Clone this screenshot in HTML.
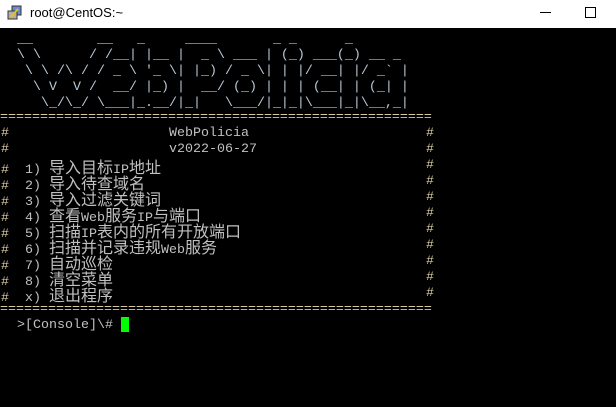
<!DOCTYPE html>
<html><head><meta charset="utf-8"><style>
*{margin:0;padding:0}
body{width:616px;height:407px;background:#000;overflow:hidden;position:relative;font-family:"Liberation Mono",monospace}
#tb{position:absolute;left:0;top:0;width:616px;height:28px;background:#fff}
#tt{position:absolute;left:30px;top:5px;font:13px "Liberation Sans",sans-serif;color:#000}
.l{position:absolute;left:1px;white-space:pre;font-size:13.33px;line-height:16px;color:#c0c0c0}
.a{color:#b8c8d8}
.h{color:#d8c8a0}
.c{font-family:"Noto Sans CJK SC",sans-serif;font-size:16px}
</style></head><body>
<div id="tb">
<svg style="position:absolute;left:7px;top:5px" width="16" height="16" viewBox="0 0 16 16"><rect x="5" y="1" width="9" height="9" fill="#6a8cc8" stroke="#333"/><rect x="1" y="6" width="9" height="8" fill="#b0b0b0" stroke="#333"/><path d="M4 12 L11 4" stroke="#e8c020" stroke-width="2"/></svg>
<div id="tt">root@CentOS:~</div>
<div style="position:absolute;left:540px;top:12px;width:11px;height:1px;background:#000"></div>
<div style="position:absolute;left:585px;top:7px;width:9px;height:9px;border:1px solid #000"></div>
</div>
<div class="l a" style="top:32px">  __        __   _     ____       _ _      _       
  \ \      / /__| |__ |  _ \ ___ | (_) ___(_) __ _ 
   \ \ /\ / / _ \ '_ \| |_) / _ \| | |/ __| |/ _` |
    \ V  V /  __/ |_) |  __/ (_) | | | (__| | (_| |
     \_/\_/ \___|_.__/|_|   \___/|_|_|\___|_|\__,_|</div>
<div class="l h" style="top:110px;left:0">======================================================</div>
<div class="l" style="top:126px"><span class="h">#</span>                    WebPolicia</div>
<div class="l" style="top:142px"><span class="h">#</span>                    v2022-06-27</div>
<div class="l" style="top:158px"><span class="h">#</span>  1) <span class="c">导入目标</span>IP<span class="c">地址</span></div>
<div class="l" style="top:174px"><span class="h">#</span>  2) <span class="c">导入待查域名</span></div>
<div class="l" style="top:190px"><span class="h">#</span>  3) <span class="c">导入过滤关键词</span></div>
<div class="l" style="top:206px"><span class="h">#</span>  4) <span class="c">查看</span>Web<span class="c">服务</span>IP<span class="c">与端口</span></div>
<div class="l" style="top:222px"><span class="h">#</span>  5) <span class="c">扫描</span>IP<span class="c">表内的所有开放端口</span></div>
<div class="l" style="top:238px"><span class="h">#</span>  6) <span class="c">扫描并记录违规</span>Web<span class="c">服务</span></div>
<div class="l" style="top:254px"><span class="h">#</span>  7) <span class="c">自动巡检</span></div>
<div class="l" style="top:270px"><span class="h">#</span>  8) <span class="c">清空菜单</span></div>
<div class="l" style="top:286px"><span class="h">#</span>  x) <span class="c">退出程序</span></div>
<div class="l h" style="top:126px;left:426px">#<br>#<br>#<br>#<br>#<br>#<br>#<br>#<br>#<br>#<br>#</div>
<div class="l h" style="top:302px;left:0">======================================================</div>
<div class="l" style="top:318px">  &gt;[Console]\# </div>
<div style="position:absolute;left:121px;top:317px;width:8px;height:15px;background:#00ff00"></div>
</body></html>
